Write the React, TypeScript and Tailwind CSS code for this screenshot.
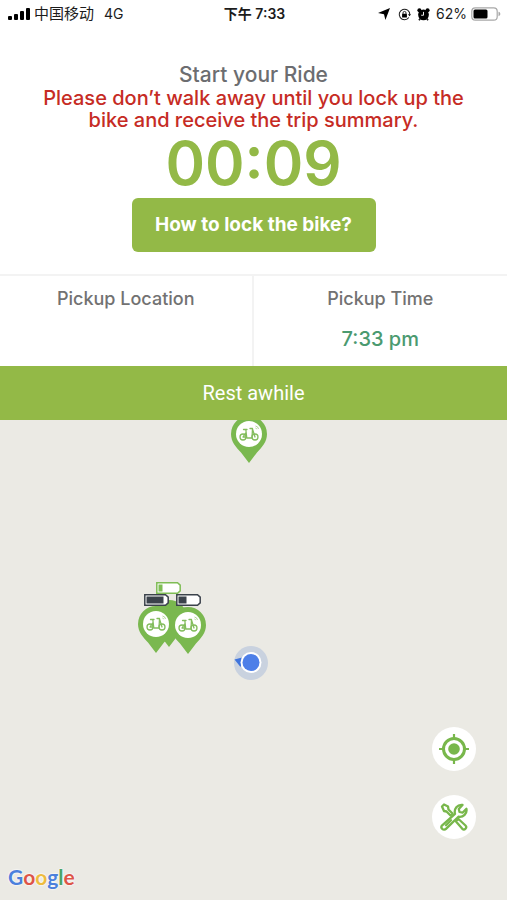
import clsx from "clsx";

function SignalIcon(): React.JSX.Element {
  return (
    <svg className="h-3 w-[22px]" viewBox="0 0 22 12" aria-hidden="true">
      <rect x="0" y="8" width="4" height="4" rx="1" />
      <rect x="6" y="6" width="4" height="6" rx="1" />
      <rect x="12" y="3" width="4" height="9" rx="1" />
      <rect x="18" y="0" width="4" height="12" rx="1" />
    </svg>
  );
}

function StatusBar(): React.JSX.Element {
  return (
    <header className="grid h-7 grid-cols-[1fr_auto_1fr] items-center bg-white pl-2 pr-1.5 font-['Inter','Noto_Sans_CJK_SC',sans-serif] text-[15px] leading-5 text-[#1c1c1c]">
      <div className="flex items-center">
        <SignalIcon />
        <span className="ml-1">中国移动</span>
        <span className="ml-2.5 text-sm">4G</span>
      </div>
      <div className="text-sm font-semibold">下午 7:33</div>
      <div className="flex items-center justify-end gap-1.5">
        <svg className="size-3" viewBox="0 0 12 12" aria-hidden="true">
          <path d="M12 0 7.400 12 6 6.200 0 5Z" />
        </svg>
        <svg className="ml-0.5 size-[13px]" viewBox="0 0 14 14" aria-hidden="true">
          <path
            d="M11.7 10.2A5.7 5.7 0 1 1 12.7 7"
            fill="none"
            stroke="currentColor"
            strokeWidth="1.1"
          />
          <path d="M10.8 6.6h3.2l-1.6 2.2Z" />
          <rect x="4.4" y="6.3" width="5.2" height="3.9" rx=".6" />
          <path
            d="M5.4 6.5V5.3a1.6 1.6 0 0 1 3.2 0v1.2"
            fill="none"
            stroke="currentColor"
            strokeWidth="1"
          />
        </svg>
        <svg className="size-[13px]" viewBox="0 0 14 14" aria-hidden="true">
          <circle cx="7" cy="7.4" r="5.8" />
          <circle cx="2.6" cy="2.5" r="2.2" />
          <circle cx="11.4" cy="2.5" r="2.2" />
          <path
            d="m3.6 11.3-1.5 2M10.4 11.3l1.5 2"
            stroke="currentColor"
            strokeWidth="1.8"
          />
          <path d="M7 4.2v3.6H4.5" fill="none" stroke="#fff" strokeWidth="1" />
        </svg>
        <span className="-mr-0.5 text-sm">62%</span>
        <svg className="h-[14px] w-[30px]" viewBox="0 0 30 14" aria-hidden="true">
          <rect
            x=".8"
            y=".8"
            width="25.4"
            height="12.4"
            rx="3.5"
            fill="none"
            stroke="#a8a8a8"
            strokeWidth="1.2"
          />
          <rect x="2.5" y="2.5" width="14" height="9" rx="1.5" />
          <path d="M27.5 4.8c2.4.6 2.4 3.8 0 4.4Z" fill="#a8a8a8" />
        </svg>
      </div>
    </header>
  );
}

function PinShape(): React.JSX.Element {
  return (
    <path
      d="M18 0a18 18 0 0 1 18 18c0 8-5 13-10 18.500L18 47l-8-10.500C5 31 0 26 0 18A18 18 0 0 1 18 0Z"
      fill="#7ab84f"
    />
  );
}

function BikePin({ className }: { readonly className: string }): React.JSX.Element {
  return (
    <svg
      className={clsx("absolute h-[47px] w-9", className)}
      viewBox="0 0 36 47"
      fill="none"
      role="img"
      aria-label="Bike"
    >
      <PinShape />
      <circle cx="18" cy="18" r="13" fill="#fff" />
      <g
        stroke="#83bd5d"
        strokeWidth="1.300"
        strokeLinecap="round"
        strokeLinejoin="round"
      >
        <circle cx="12" cy="21" r="3" />
        <circle cx="24" cy="21" r="3" />
        <path d="M12 21h2.500l1.500 1h5l.5-9.500h-2.500M15.800 22l-1-8.500M12.500 13.500h3.500M21.500 13l2.500 8M12 21l3-4.500" />
      </g>
      <path
        d="M24.500 10a3.500 3.500 0 0 1 3 3M24.500 12a1.500 1.500 0 0 1 1.200 1.200"
        stroke="#a8d08f"
        strokeWidth=".9"
      />
    </svg>
  );
}

function PlainPin({ className }: { readonly className: string }): React.JSX.Element {
  return (
    <svg
      className={clsx("absolute h-[47px] w-9", className)}
      viewBox="0 0 36 47"
      aria-hidden="true"
    >
      <PinShape />
    </svg>
  );
}

function BikeBattery({
  className,
  fillWidth,
}: {
  readonly className: string;
  readonly fillWidth: number;
}): React.JSX.Element {
  return (
    <svg
      className={clsx("absolute h-3 w-[25px]", className)}
      viewBox="0 0 25 12"
      aria-hidden="true"
    >
      <path
        d="M.8.8h20.700l2.700 2.400v5.600l-2.700 2.400H.8Z"
        fill="#fff"
        stroke="currentColor"
        strokeWidth="1.500"
      />
      <rect x="2.500" y="2.500" width={fillWidth} height="7" fill="currentColor" />
    </svg>
  );
}

function UserDot(): React.JSX.Element {
  return (
    <svg
      className="absolute left-[233px] top-[225px] size-9"
      viewBox="0 0 36 36"
      role="img"
      aria-label="Your location"
    >
      <circle cx="18" cy="18" r="17" fill="#c9d2df" />
      <path d="M1.500 14.500 11 12l-3.500 10Z" fill="#3f74dc" />
      <circle cx="18" cy="17.500" r="10.500" fill="#fff" />
      <circle cx="18" cy="17.500" r="8.500" fill="#4d7fe8" />
    </svg>
  );
}

function LocateIcon(): React.JSX.Element {
  return (
    <svg className="size-[30px]" viewBox="0 0 30 30" fill="none" aria-hidden="true">
      <circle cx="15" cy="15" r="10.500" stroke="#78b74b" strokeWidth="3" />
      <circle cx="15" cy="15" r="5.800" fill="#78b74b" />
      <path
        d="M15 0v5M15 25v5M0 15h5M25 15h5"
        stroke="#78b74b"
        strokeWidth="2.200"
      />
    </svg>
  );
}

function ToolsIcon(): React.JSX.Element {
  return (
    <svg
      className="size-7"
      viewBox="0 0 28 28"
      fill="none"
      stroke="#78b74b"
      strokeWidth="2.300"
      strokeLinejoin="round"
      strokeLinecap="round"
      aria-hidden="true"
    >
      <path d="M2 3.500 4 1.500 8 3.500 8.500 6.500 12.500 10.500 10.500 12.500 6.500 8.500 4 8Z" />
      <path d="M16 18.500 18.500 16 25.500 22.500a2.300 2.300 0 0 1-3.200 3.300Z" />
      <path d="M2.200 22.300 15 10.800c-1.300-4.800 2.400-9.500 7.500-8.800l-3.700 4 .7 3 3 .7 3.900-3.900c1 4.800-3.200 8.900-8 7.900L6 25.900a2.600 2.600 0 0 1-3.800-3.600Z" />
      <path d="m6 22.300 5-5" />
    </svg>
  );
}

function GoogleMark(): React.JSX.Element {
  return (
    <div className="absolute bottom-[7px] left-2 font-['Lato',sans-serif] text-[21px] font-bold leading-8 text-[#4b80dc] [text-shadow:0_0_2px_#fff,0_0_2px_#fff]">
      G<span className="text-[#dd5548]">o</span>
      <span className="text-[#eebc3f]">o</span>g
      <span className="text-[#4ba565]">l</span>
      <span className="text-[#dd5548]">e</span>
    </div>
  );
}

export default function App(): React.JSX.Element {
  return (
    <div className="flex min-h-screen flex-col bg-white font-['Inter',sans-serif]">
      <StatusBar />
      <main className="flex flex-1 flex-col">
        <section className="flex flex-col items-center px-8 pb-[22px] pt-[35px] text-center">
          <h1 className="text-[21px] font-medium leading-6 text-[#6c6d70]">
            Start your Ride
          </h1>
          <p className="text-xl font-medium leading-[22px] text-[#c62b24]">
            Please don’t walk away until you lock up the
            <br />
            bike and receive the trip summary.
          </p>
          <div className="mb-0.5 text-[60px] font-semibold leading-[65px] text-[#93b947]">
            00:09
          </div>
          <button
            type="button"
            className="h-[54px] w-[244px] rounded-md bg-[#93b947] text-[19px] font-bold text-white"
          >
            How to lock the bike?
          </button>
        </section>
        <section className="grid grid-cols-2 divide-x-2 divide-[#f3f3f3] border-t-2 border-[#f3f3f3] text-center">
          <div className="h-[90px] pt-[11px]">
            <h2 className="text-lg font-medium leading-6 text-[#727272]">
              Pickup Location
            </h2>
          </div>
          <div className="h-[90px] pt-[11px]">
            <h2 className="text-lg font-medium leading-6 text-[#727272]">
              Pickup Time
            </h2>
            <p className="mt-4 text-xl font-medium leading-6 text-[#4b9a70]">
              7:33 pm
            </p>
          </div>
        </section>
        <button
          type="button"
          className="h-[54px] w-full bg-[#93b947] font-['Roboto',sans-serif] text-xl text-white"
        >
          Rest awhile
        </button>
        <section className="relative flex-1 overflow-hidden bg-[#ebeae4]" aria-label="Map">
          <BikePin className="-top-1 left-[231px]" />
          <PlainPin className="left-[151px] top-[180px]" />
          <BikePin className="left-[138px] top-[186px]" />
          <BikePin className="left-[170px] top-[187px]" />
          <BikeBattery className="left-[156px] top-[162px] text-[#7fbd55]" fillWidth={4} />
          <BikeBattery className="left-[144px] top-[174px] text-[#3b424b]" fillWidth={17} />
          <BikeBattery className="left-[176px] top-[174px] text-[#3b424b]" fillWidth={8} />
          <UserDot />
          <div className="absolute bottom-[61px] right-[31px] flex flex-col gap-6">
            <button
              type="button"
              aria-label="Find my location"
              className="flex size-11 items-center justify-center rounded-full bg-white"
            >
              <LocateIcon />
            </button>
            <button
              type="button"
              aria-label="Report a problem"
              className="flex size-11 items-center justify-center rounded-full bg-white"
            >
              <ToolsIcon />
            </button>
          </div>
          <GoogleMark />
        </section>
      </main>
    </div>
  );
}
